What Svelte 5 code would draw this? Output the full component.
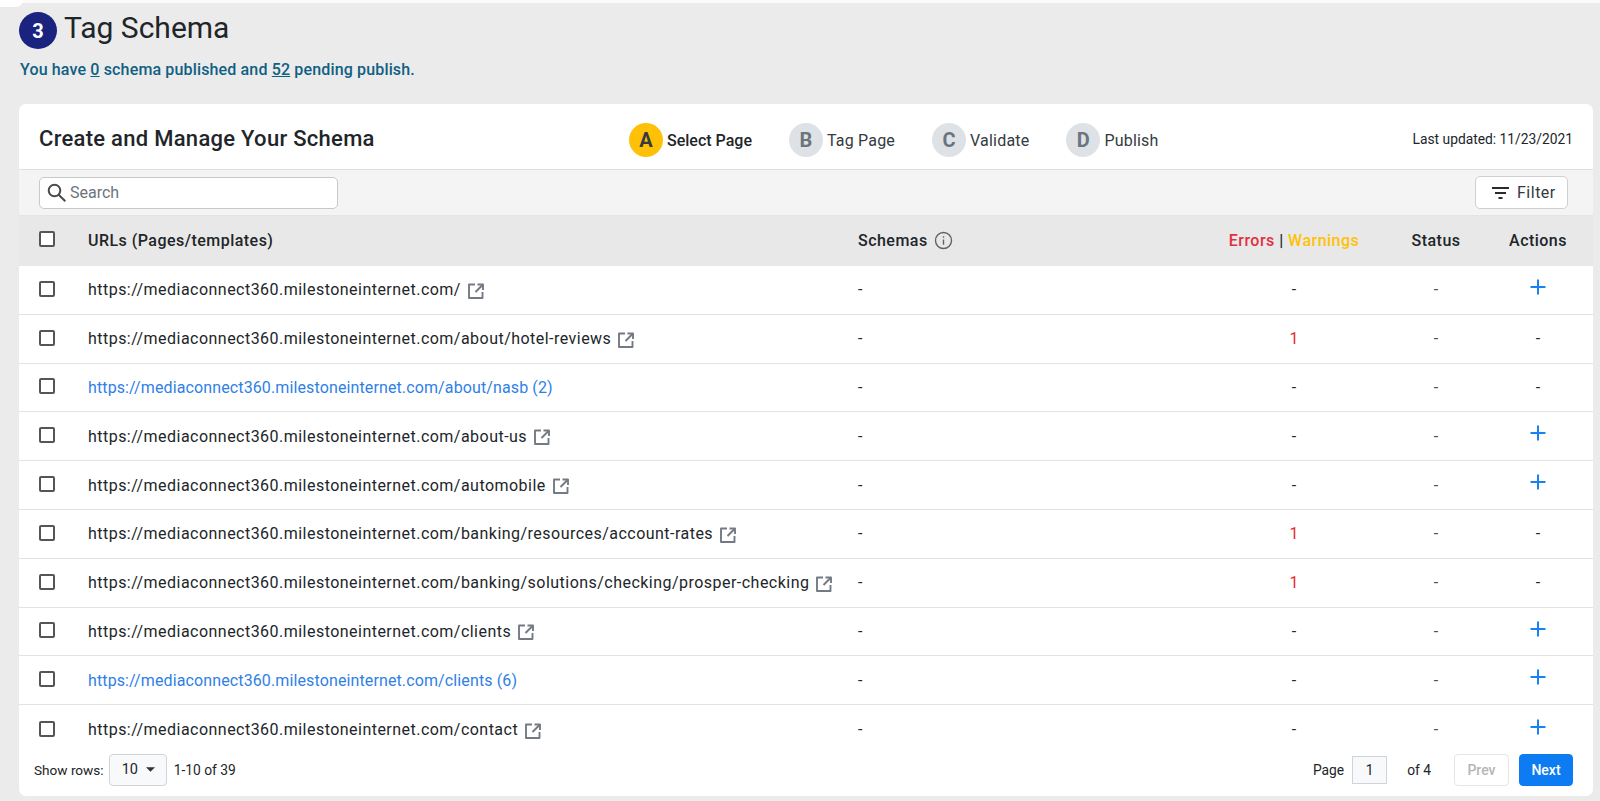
<script lang="ts">
	type Row = { url: string; link?: boolean; errors?: string; action?: boolean };

	const base = 'https://mediaconnect360.milestoneinternet.com';

	const rows: Row[] = [
		{ url: '/', action: true },
		{ url: '/about/hotel-reviews', errors: '1' },
		{ url: '/about/nasb (2)', link: true },
		{ url: '/about-us', action: true },
		{ url: '/automobile', action: true },
		{ url: '/banking/resources/account-rates', errors: '1' },
		{ url: '/banking/solutions/checking/prosper-checking', errors: '1' },
		{ url: '/clients', action: true },
		{ url: '/clients (6)', link: true, action: true },
		{ url: '/contact', action: true }
	];

	const steps = [
		{ letter: 'A', label: 'Select Page', active: true },
		{ letter: 'B', label: 'Tag Page' },
		{ letter: 'C', label: 'Validate' },
		{ letter: 'D', label: 'Publish' }
	];
</script>

<div class="page">
	<div class="corner"></div>

	<div class="heading">
		<span class="badge">3</span>
		<h1>Tag Schema</h1>
	</div>
	<p class="summary">
		You have <u>0</u> schema published and <u>52</u> pending publish.
	</p>

	<section class="card">
		<header class="card-head">
			<h2>Create and Manage Your Schema</h2>
			<ol class="steps">
				{#each steps as step}
					<li class="step" class:active={step.active}>
						<span class="step-dot">{step.letter}</span>
						<span class="step-label">{step.label}</span>
					</li>
				{/each}
			</ol>
			<span class="updated">Last updated: 11/23/2021</span>
		</header>

		<div class="toolbar">
			<label class="search">
				<svg width="20" height="20" viewBox="0 0 20 20" fill="none" stroke="#4a4a4a" stroke-width="2">
					<circle cx="7.500" cy="7.500" r="5.800" />
					<path d="M11.700 11.700L18.300 18.300" />
				</svg>
				<input type="text" placeholder="Search" />
			</label>
			<button class="filter">
				<svg width="17" height="12" viewBox="0 0 17 12" fill="#2b2b2b">
					<rect x="0" y="0" width="17" height="2" />
					<rect x="3" y="5" width="11" height="2" />
					<rect x="6.500" y="10" width="4" height="2" />
				</svg>
				Filter
			</button>
		</div>

		<div class="table">
			<div class="grid thead">
				<span class="cell-check"><span class="check"></span></span>
				<span>URLs (Pages/templates)</span>
				<span class="schemas">
					Schemas
					<svg width="19" height="19" viewBox="0 0 18 18" fill="none" stroke="#5f6368" stroke-width="1.300">
						<circle cx="9" cy="9" r="7.600" />
						<path d="M9 8v5" />
						<path d="M9 5v1.400" />
					</svg>
				</span>
				<span class="center"><span class="err">Errors</span> | <span class="warn">Warnings</span></span>
				<span class="center">Status</span>
				<span class="center">Actions</span>
			</div>

			{#each rows as row}
				<div class="grid row">
					<span class="cell-check"><span class="check"></span></span>
					<span class="url" class:link={row.link}>
						<span>{base}{row.url}</span>
						{#if !row.link}
							<svg class="open" width="16" height="16" viewBox="0 0 16 16" fill="none" stroke="#747a83" stroke-width="1.900" stroke-linejoin="round">
								<path d="M7 1.500H1v13.500h13.500V9" />
								<path d="M9.500 1.500H15V7" />
								<path d="M15 1.500L7.500 9" />
							</svg>
						{/if}
					</span>
					<span class="dash">-</span>
					<span class="center" class:err={row.errors}>{row.errors ?? '-'}</span>
					<span class="center muted">-</span>
					<span class="center">
						{#if row.action}
							<svg class="plus" width="16" height="16" viewBox="0 0 16 16" stroke="#1a82f0" stroke-width="2">
								<path d="M8 0.500v15" />
								<path d="M0.500 8h15" />
							</svg>
						{:else}
							-
						{/if}
					</span>
				</div>
			{/each}
		</div>

		<footer class="pager">
			<div class="pager-side">
				<span class="rows-label">Show rows:</span>
				<span class="rows-select">
					10
					<svg width="9" height="5" viewBox="0 0 10 5" fill="#333"><path d="M0 0h10L5 5z" /></svg>
				</span>
				<span>1-10 of 39</span>
			</div>
			<div class="pager-side">
				<span>Page</span>
				<span class="page-input">1</span>
				<span>of 4</span>
				<button class="btn prev">Prev</button>
				<button class="btn next">Next</button>
			</div>
		</footer>
	</section>
</div>

<style>
	:global(body) {
		margin: 0;
		background: #ebebeb;
	}

	.page {
		position: relative;
		height: 801px;
		box-sizing: border-box;
		padding: 3px 7px 0 19px;
		overflow: hidden;
		background: linear-gradient(#fafafa 0 3px, #ebebeb 3px);
		font-family: Roboto, 'Liberation Sans', sans-serif;
		color: #212529;
	}

	.corner {
		position: absolute;
		top: 0;
		left: 0;
		width: 23px;
		height: 7px;
		background: #fff;
		border-bottom-right-radius: 7px;
	}

	.heading {
		display: flex;
		align-items: center;
		gap: 7px;
		height: 43px;
		padding-top: 8px;
		box-sizing: border-box;
	}

	.badge {
		display: flex;
		align-items: center;
		justify-content: center;
		width: 38px;
		height: 37px;
		margin-top: 4px;
		border-radius: 50%;
		background: #1a237e;
		color: #fff;
		font-size: 20px;
		font-weight: 700;
	}

	h1 {
		margin: -2px 0 0;
		font-size: 30px;
		font-weight: 400;
		line-height: 34px;
	}

	.summary {
		margin: 14px 0 0 1px;
		height: 44px;
		font-size: 16px;
		font-weight: 500;
		letter-spacing: 0.15px;
		line-height: 19px;
		color: #0e6083;
	}

	.card {
		width: 1574px;
		height: 692px;
		border-radius: 7px;
		background: #fff;
		overflow: hidden;
	}

	.card-head {
		display: flex;
		align-items: center;
		box-sizing: border-box;
		height: 66px;
		padding: 4px 20px 0;
		border-bottom: 1px solid #e0e0e0;
	}

	h2 {
		margin: 0;
		width: 590px;
		font-size: 22px;
		font-weight: 500;
		letter-spacing: 0.28px;
		color: #212529;
	}

	.steps {
		display: flex;
		margin: 2px 0 0;
		padding: 0;
		list-style: none;
	}

	.step {
		display: flex;
		align-items: center;
		gap: 4px;
		margin-right: 37px;
		font-size: 16px;
		letter-spacing: 0.2px;
		color: #343a40;
	}

	.step-label {
		margin-top: 1px;
	}

	.step-dot {
		display: flex;
		align-items: center;
		justify-content: center;
		width: 34px;
		height: 34px;
		border-radius: 50%;
		background: #dee2e6;
		color: #6c757d;
		font-size: 20px;
		font-weight: 700;
	}

	.active .step-dot {
		background: #ffc107;
		color: #343a40;
	}

	.active .step-label {
		font-weight: 500;
		letter-spacing: 0;
		color: #212529;
	}

	.updated {
		margin-left: auto;
		font-size: 13.800px;
		font-weight: 400;
		color: #212529;
	}

	.toolbar {
		display: flex;
		align-items: center;
		justify-content: space-between;
		box-sizing: border-box;
		height: 46px;
		padding: 0 25px 0 20px;
		background: #f4f4f4;
		border-bottom: 1px solid #e4e4e4;
	}

	.search {
		display: flex;
		align-items: center;
		gap: 3px;
		box-sizing: border-box;
		width: 299px;
		height: 32px;
		padding: 0 7px;
		border: 1px solid #c8c8c8;
		border-radius: 5px;
		background: #fff;
	}

	.search input {
		flex: 1;
		min-width: 0;
		padding: 0;
		border: 0;
		outline: 0;
		font: 400 16px Roboto, sans-serif;
		color: #333;
	}

	.search input::placeholder {
		color: #6c757d;
		opacity: 1;
	}

	.filter {
		display: flex;
		align-items: center;
		gap: 8px;
		box-sizing: border-box;
		width: 93px;
		height: 33px;
		padding: 0 0 0 16px;
		border: 1px solid #cfcfcf;
		border-radius: 5px;
		background: #fff;
		font: 400 16px Roboto, sans-serif;
		letter-spacing: 0.5px;
		color: #343a40;
	}

	.grid {
		display: grid;
		grid-template-columns: 69px 770px 340px 192px 92px 112px;
		align-items: center;
	}

	.thead {
		box-sizing: border-box;
		height: 50px;
		padding-bottom: 2px;
		background: #e8e8e8;
		font-size: 16px;
		font-weight: 500;
		letter-spacing: 0.47px;
	}

	.row {
		height: 48.800px;
		box-sizing: border-box;
		border-bottom: 1px solid #e2e2e6;
	}

	.row:last-child {
		border-bottom: 0;
	}

	.row .err {
		color: #e32b2b;
	}

	.cell-check {
		display: flex;
		padding-left: 20px;
	}

	.check {
		box-sizing: border-box;
		width: 16px;
		height: 16px;
		margin-top: -2px;
		border: 2px solid #555;
		border-radius: 2px;
		background: #fff;
	}

	.url {
		display: flex;
		align-items: center;
		gap: 7px;
		font-size: 16px;
		letter-spacing: 0.47px;
		color: #212529;
		white-space: nowrap;
	}

	.url.link {
		letter-spacing: 0.12px;
		color: #2f7fe6;
	}

	.open {
		flex: none;
		margin-top: 2px;
	}

	.schemas {
		display: flex;
		align-items: center;
		gap: 6px;
	}

	.center {
		text-align: center;
		font-size: 16px;
	}

	.muted {
		color: #495057;
	}

	.err {
		color: #e0303f;
	}

	.warn {
		color: #ffc107;
	}

	.dash {
		font-size: 16px;
	}

	.plus {
		display: block;
		margin: -5.600px auto 0;
	}

	.pager {
		display: flex;
		align-items: flex-start;
		justify-content: space-between;
		padding: 0 20px 0 15px;
		font-size: 13.800px;
	}

	.pager-side {
		display: flex;
		align-items: center;
		height: 32px;
	}

	.rows-label {
		font-size: 13.600px;
	}

	.rows-select {
		display: flex;
		align-items: center;
		gap: 8px;
		box-sizing: border-box;
		width: 58px;
		height: 32px;
		margin: 0 7px 0 5px;
		padding-left: 12px;
		border: 1px solid #ced4da;
		border-radius: 4px;
		background: #f8f9fa;
		font-size: 14.500px;
	}

	.page-input {
		display: flex;
		align-items: center;
		justify-content: center;
		box-sizing: border-box;
		width: 35px;
		height: 28px;
		margin: 0 20px 0 8px;
		border: 1px solid #ced4da;
		background: #f8f9fa;
	}

	.btn {
		box-sizing: border-box;
		width: 54px;
		height: 32px;
		margin-left: 10px;
		border-radius: 4px;
		font: 500 14px Roboto, sans-serif;
	}

	.prev {
		width: 55px;
		margin-left: 23px;
		border: 1px solid #e6e6e6;
		background: #fff;
		color: #b5b5b5;
	}

	.next {
		border: 1px solid #0d7cf2;
		background: #0d7cf2;
		color: #fff;
	}
</style>
